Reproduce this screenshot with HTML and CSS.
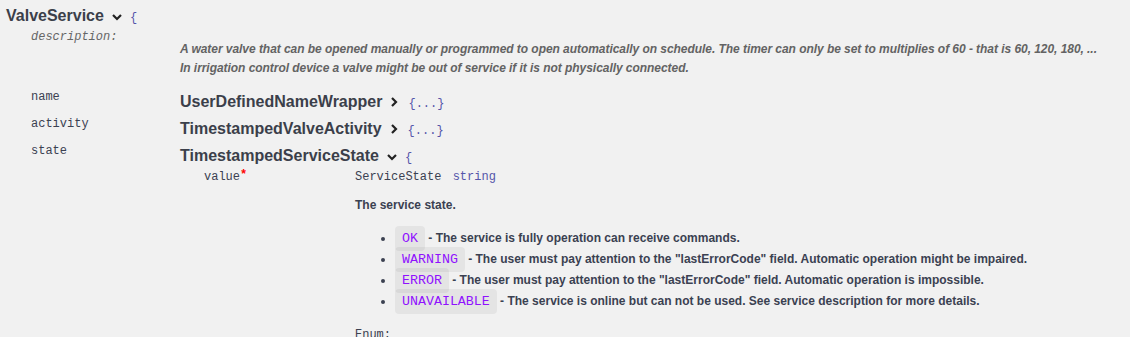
FILE: index.html
```html
<!DOCTYPE html>
<html lang="en">
<head>
    <meta charset="UTF-8">
    <meta name="viewport" content="width=device-width, initial-scale=1.0">
    <title>ValveService model</title>
    <link rel="stylesheet" href="styles.css">
</head>
<body>
    <div class="model-box">
        <div class="model-head top">
            <span class="model-title">ValveService</span>
            <svg class="toggle" width="10" height="10" viewBox="0 0 10 10"><polyline points="1,3 5,7 9,3"/></svg>
            <span class="brace">{</span>
        </div>

        <table class="model">
            <tr class="desc-row">
                <td class="prop-name"><span class="property">description:</span></td>
                <td>
                    <div class="description">
                        <p>A water valve that can be opened manually or programmed to open automatically on schedule. The timer can only be set to multiplies of 60 - that is 60, 120, 180, ...<br>
                        In irrigation control device a valve might be out of service if it is not physically connected.</p>
                    </div>
                </td>
            </tr>
            <tr>
                <td class="prop-name">name</td>
                <td>
                    <div class="model-head">
                        <span class="model-title">UserDefinedNameWrapper</span>
                        <svg class="toggle right" width="10" height="10" viewBox="0 0 10 10"><polyline points="3,1 7,5 3,9"/></svg>
                        <span class="brace">{...}</span>
                    </div>
                </td>
            </tr>
            <tr>
                <td class="prop-name">activity</td>
                <td>
                    <div class="model-head">
                        <span class="model-title">TimestampedValveActivity</span>
                        <svg class="toggle right" width="10" height="10" viewBox="0 0 10 10"><polyline points="3,1 7,5 3,9"/></svg>
                        <span class="brace">{...}</span>
                    </div>
                </td>
            </tr>
            <tr>
                <td class="prop-name">state</td>
                <td>
                    <div class="model-head">
                        <span class="model-title">TimestampedServiceState</span>
                        <svg class="toggle" width="10" height="10" viewBox="0 0 10 10"><polyline points="1,3 5,7 9,3"/></svg>
                        <span class="brace">{</span>
                    </div>
                    <table class="model inner">
                        <tr>
                            <td class="prop-name">value<span class="star">*</span></td>
                            <td>
                                <span class="ref">ServiceState</span>
                                <span class="prop-type">string</span>

                                <div class="markdown">
                                    <p>The service state.</p>
                                    <ul>
                                        <li><code>OK</code> - The service is fully operation can receive commands.</li>
                                        <li><code>WARNING</code> - The user must pay attention to the "lastErrorCode" field. Automatic operation might be impaired.</li>
                                        <li><code>ERROR</code> - The user must pay attention to the "lastErrorCode" field. Automatic operation is impossible.</li>
                                        <li><code>UNAVAILABLE</code> - The service is online but can not be used. See service description for more details.</li>
                                    </ul>
                                </div>

                                <div class="enum">Enum:</div>
                            </td>
                        </tr>
                    </table>
                </td>
            </tr>
        </table>
    </div>
</body>
</html>
```

FILE: styles.css
```css
:root {
    --text-color: #3b4151;
    --muted-color: #666;
    --type-color: #55a;
    --code-color: #9012fe;
}

* {
    margin: 0;
    padding: 0;
    box-sizing: border-box;
}

body {
    background: #f1f1f1;
    font-family: 'Liberation Sans', Arial, sans-serif;
    color: var(--text-color);
    overflow: hidden;
}

.model-box {
    padding: 0 6px;
}

.model-head {
    height: 27px;
    display: flex;
    align-items: center;
    padding-bottom: 3px;
}

.model-head.top {
    height: 30px;
    padding-bottom: 1px;
    padding-top: 2px;
}

.model-title {
    font-family: 'Liberation Sans', Arial, sans-serif;
    font-size: 16px;
    font-weight: 700;
    color: #3b3f4a;
}

.toggle {
    fill: none;
    stroke: #222;
    stroke-width: 2.2;
    margin: 2px 8px 0 8px;
}

.toggle.right {
    margin: 0 9px 0 7px;
}

.brace {
    font-family: 'Liberation Mono', 'Courier New', monospace;
    font-size: 12px;
    color: #55a;
    position: relative;
    top: 2px;
}

table.model {
    border-collapse: collapse;
    font-family: 'Liberation Mono', 'Courier New', monospace;
    font-size: 12px;
}

table.model td {
    vertical-align: top;
    padding: 0;
}

table.model tr > td:first-child {
    width: 174px;
    padding-left: 25px;
    line-height: 15px;
    white-space: nowrap;
}

.property {
    color: var(--muted-color);
    font-style: italic;
}

.description p {
    font-family: 'Liberation Sans', Arial, sans-serif;
    font-size: 12px;
    font-style: italic;
    font-weight: 700;
    color: #636363;
    line-height: 19px;
    letter-spacing: -0.05px;
    margin: 10px 0 12px;
}

table.inner {
    margin-top: -1px;
}

table.inner tr > td:first-child {
    width: 175px;
    padding-left: 24px;
}

table.inner td {
    line-height: 15px;
}

.star {
    color: red;
    font-weight: 700;
    position: relative;
    top: -2px;
}

.prop-type {
    color: var(--type-color);
    margin-left: 4px;
}

.markdown {
    font-family: 'Liberation Sans', Arial, sans-serif;
    font-size: 12px;
    font-weight: 700;
    color: var(--text-color);
}

.markdown p {
    margin: 13px 0 15px;
    line-height: 15px;
}

.markdown ul {
    padding-left: 40px;
    line-height: 21px;
}

.markdown code {
    font-family: 'Liberation Mono', 'Courier New', monospace;
    font-size: 13.3px;
    font-weight: 400;
    color: var(--code-color);
    background: rgba(0, 0, 0, 0.05);
    padding: 5px 7px;
    border-radius: 4px;
}

.enum {
    margin-top: 16px;
}
```
